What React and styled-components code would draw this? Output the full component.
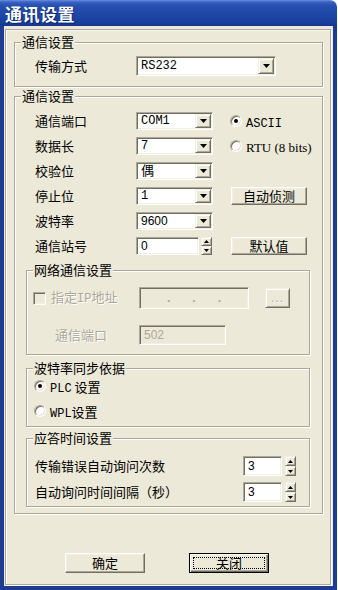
import React from "react";
import styled, { createGlobalStyle, css } from "styled-components";

const CJK = `"Noto Sans CJK SC", "Liberation Sans", sans-serif`;
const MONO = `"Liberation Mono", "Noto Sans CJK SC", monospace`;

const GlobalStyle = createGlobalStyle`
  html, body {
    margin: 0;
    padding: 0;
    background: #fff;
  }
  body {
    font-family: ${CJK};
    font-size: 13px;
    color: #000;
  }
`;

const sunken = css`
  border: 1px solid;
  border-color: #aca899 #fff #fff #aca899;
  box-shadow: inset 1px 1px 0 #716f64, inset -1px -1px 0 #f1efe2;
`;

const raised = css`
  border: 1px solid;
  border-color: #f1efe2 #716f64 #716f64 #f1efe2;
  box-shadow: inset 1px 1px 0 #fff, inset -1px -1px 0 #aca899;
  background: #ece9d8;
`;

const etched = css`
  border: 1px solid #aca899;
  box-shadow: inset 1px 1px 0 #fff, 1px 1px 0 #fff;
`;

const Window = styled.div`
  width: 337px;
  height: 590px;
  display: flex;
  flex-direction: column;
`;

const TitleBar = styled.div`
  height: 26px;
  flex: none;
  display: flex;
  align-items: center;
  padding-left: 5px;
  border-top-right-radius: 7px;
  background: linear-gradient(
    to bottom,
    #6a8ede 0,
    #3b64c4 2px,
    #2751b2 5px,
    #1f48a7 50%,
    #193f9b 85%,
    #13358e 100%
  );
  color: #fff;
  font: bold 17px ${CJK};
  letter-spacing: 0.5px;
  text-shadow: 1px 1px 0 #0c2466;
`;

const Client = styled.div`
  flex: 1;
  display: flex;
  flex-direction: column;
  background: #ece9d8;
  border: 4px solid #1d3d93;
  border-top: 0;
`;

const Frame = styled.div`
  flex: 1;
  display: flex;
  flex-direction: column;
  margin: 3px 2px 1px 1px;
  padding: 5px 7px 11px 8px;
  ${etched};
`;

const Group = styled.div`
  position: relative;
  margin-top: ${(p) => p.$mt || 0}px;
  padding: ${(p) => p.$pad || "0"};
  ${etched};
`;

const Caption = styled.span`
  position: absolute;
  top: -8px;
  left: 6px;
  padding: 0 1px;
  line-height: 14px;
  font-size: 13px;
  background: #ece9d8;
  white-space: nowrap;
`;

const Label = styled.span`
  font-size: 13px;
  line-height: 16px;
  white-space: nowrap;
  padding-left: ${(p) => p.$indent || 0}px;
  color: ${(p) => (p.$disabled ? "#aca899" : "#000")};
  text-shadow: ${(p) => (p.$disabled ? "1px 1px 0 #fff" : "none")};
`;

const Mono = styled.span`
  font-family: ${MONO};
  font-size: 12px;
`;

const TransportRow = styled.div`
  display: grid;
  grid-template-columns: 101px 140px;
  align-items: center;
  padding-left: 20px;
`;

const ComboBox = styled.div`
  box-sizing: border-box;
  width: ${(p) => p.$w}px;
  height: ${(p) => p.$h}px;
  display: flex;
  align-items: center;
  padding: 0 1px 0 4px;
  background: #fff;
  ${sunken};
`;

const ComboText = styled.span`
  flex: 1;
  font-family: ${(p) => (p.$sans ? `"Liberation Sans", sans-serif` : MONO)};
  font-size: 12px;
  line-height: 14px;
  white-space: nowrap;
`;

const DropButton = styled.span`
  box-sizing: border-box;
  width: 16px;
  height: ${(p) => p.$h}px;
  display: flex;
  align-items: center;
  justify-content: center;
  ${raised};
`;

const SettingsGrid = styled.div`
  display: grid;
  grid-template-columns: 101px 94px auto;
  grid-auto-rows: 18px;
  row-gap: 7px;
  align-items: center;
  padding-left: 9px;
`;

const RadioOption = styled.label`
  display: flex;
  align-items: center;
  gap: 4px;
  height: 14px;
  font-size: 13px;
  white-space: nowrap;
`;

const RadioCircle = styled.span`
  box-sizing: border-box;
  width: 12px;
  height: 12px;
  flex: none;
  border-radius: 50%;
  display: flex;
  align-items: center;
  justify-content: center;
  background: #fff;
  border: 1px solid;
  border-color: #aca899 #fff #fff #aca899;
  box-shadow: inset 1px 1px 0 #716f64, inset -1px -1px 0 #e2dfd0;

  &::after {
    content: "";
    width: 4px;
    height: 4px;
    border-radius: 50%;
    background: ${(p) => (p.$on ? "#000" : "transparent")};
  }
`;

const Serif = styled.span`
  font-family: "Liberation Serif", serif;
  font-size: 13px;
`;

const PushButton = styled.button`
  box-sizing: border-box;
  width: ${(p) => p.$w}px;
  height: ${(p) => p.$h}px;
  margin-left: ${(p) => p.$ml || 0}px;
  padding: 0;
  font: 13px ${CJK};
  line-height: 14px;
  color: #000;
  border: 1px solid;
  border-color: #fff #716f64 #716f64 #fff;
  box-shadow: inset -1px -1px 0 #aca899, inset 1px 1px 0 #f1efe2;
  background: #ece9d8;

  ${(p) =>
    p.$default &&
    css`
      border-color: #000;
      box-shadow: inset 1px 1px 0 #fff, inset -1px -1px 0 #716f64,
        inset -2px -2px 0 #aca899;
      outline: 1px dotted #000;
      outline-offset: -5px;
    `}
`;

const Edit = styled.div`
  box-sizing: border-box;
  width: ${(p) => p.$w}px;
  height: ${(p) => p.$h}px;
  display: flex;
  align-items: center;
  padding-left: 4px;
  background: ${(p) => (p.$disabled ? "#ece9d8" : "#fff")};
  color: ${(p) => (p.$disabled ? "#aca899" : "#000")};
  font: 12px "Liberation Sans", sans-serif;
  ${sunken};
`;

const SpinWrap = styled.div`
  display: flex;
  align-items: center;
`;

const SpinButtons = styled.div`
  display: flex;
  flex-direction: column;
  width: 11px;
  height: ${(p) => p.$h}px;
  margin-left: ${(p) => p.$gap}px;
`;

const SpinHalf = styled.span`
  box-sizing: border-box;
  flex: 1;
  display: flex;
  align-items: center;
  justify-content: center;
  ${raised};
`;

const NetGrid = styled.div`
  display: grid;
  grid-template-columns: 106px 110px 25px;
  grid-template-rows: 22px 20px;
  row-gap: 16px;
  align-items: center;
  padding-left: 6px;
`;

const CheckRow = styled.div`
  display: flex;
  align-items: center;
  gap: 5px;
`;

const CheckBox = styled.span`
  box-sizing: border-box;
  width: 13px;
  height: 13px;
  background: #ece9d8;
  ${sunken};
`;

const IpDots = styled.div`
  display: flex;
  justify-content: space-around;
  width: 100%;
  padding: 0 16px 0 12px;
  color: #aca899;
  font: bold 12px "Liberation Sans", sans-serif;
`;

const EllipsisButton = styled.span`
  box-sizing: border-box;
  width: 25px;
  height: 20px;
  margin-left: 16px;
  display: flex;
  align-items: center;
  justify-content: center;
  color: #aca899;
  text-shadow: 1px 1px 0 #fff;
  font: 12px "Liberation Sans", sans-serif;
  letter-spacing: 1px;
  ${raised};
`;

const RadioStack = styled.div`
  display: flex;
  flex-direction: column;
  gap: 11px;
  padding-left: 7px;
`;

const ResponseGrid = styled.div`
  display: grid;
  grid-template-columns: 208px auto;
  grid-auto-rows: 20px;
  row-gap: 6px;
  align-items: center;
  padding-left: 8px;
`;

const ButtonBar = styled.div`
  margin-top: auto;
  display: flex;
  gap: 44px;
  padding-left: 51px;
`;

const Arrow = ({ dir = "down", w = 7, h = 4 }) => (
  <svg width={w} height={h} viewBox={`0 0 ${w} ${h}`}>
    {dir === "down" ? (
      <polygon points={`0,0 ${w},0 ${w / 2},${h}`} fill="#000" />
    ) : (
      <polygon points={`0,${h} ${w},${h} ${w / 2},0`} fill="#000" />
    )}
  </svg>
);

const Combo = ({ w, h = 18, sans, children }) => (
  <ComboBox $w={w} $h={h}>
    <ComboText $sans={sans}>{children}</ComboText>
    <DropButton $h={h - 4}>
      <Arrow />
    </DropButton>
  </ComboBox>
);

const Spin = ({ w, h, gap, children }) => (
  <SpinWrap>
    <Edit $w={w} $h={h}>
      {children}
    </Edit>
    <SpinButtons $h={h} $gap={gap}>
      <SpinHalf>
        <Arrow dir="up" w={5} h={3} />
      </SpinHalf>
      <SpinHalf>
        <Arrow w={5} h={3} />
      </SpinHalf>
    </SpinButtons>
  </SpinWrap>
);

const Radio = ({ on, children }) => (
  <RadioOption>
    <RadioCircle $on={on} />
    <span>{children}</span>
  </RadioOption>
);

export default function App() {
  return (
    <>
      <GlobalStyle />
      <Window>
        <TitleBar>通讯设置</TitleBar>
        <Client>
          <Frame>
            <Group $mt={7} $pad="13px 0 10px 0">
              <Caption>通信设置</Caption>
              <TransportRow>
                <Label>传输方式</Label>
                <Combo w={140} h={20}>
                  RS232
                </Combo>
              </TransportRow>
            </Group>

            <Group $mt={9} $pad="15px 12px 6px 11px">
              <Caption>通信设置</Caption>
              <SettingsGrid>
                <Label>通信端口</Label>
                <Combo w={77}>COM1</Combo>
                <Radio on>
                  <Mono>ASCII</Mono>
                </Radio>

                <Label>数据长</Label>
                <Combo w={77}>7</Combo>
                <Radio>
                  <Serif>RTU (8 bits)</Serif>
                </Radio>

                <Label>校验位</Label>
                <Combo w={77}>
                  <span style={{ fontFamily: CJK, fontSize: 13 }}>偶</span>
                </Combo>
                <span />

                <Label>停止位</Label>
                <Combo w={77}>1</Combo>
                <PushButton $w={76} $h={18} $ml={1}>
                  自动侦测
                </PushButton>

                <Label>波特率</Label>
                <Combo w={77} sans>
                  9600
                </Combo>
                <span />

                <Label>通信站号</Label>
                <Spin w={63} h={18} gap={2}>
                  0
                </Spin>
                <PushButton $w={76} $h={18} $ml={1}>
                  默认值
                </PushButton>
              </SettingsGrid>

              <Group $mt={15} $pad="16px 0 9px 0">
                <Caption>网络通信设置</Caption>
                <NetGrid>
                  <CheckRow>
                    <CheckBox />
                    <Label $disabled>
                      指定<span style={{ fontFamily: MONO, fontSize: 12 }}>IP</span>地址
                    </Label>
                  </CheckRow>
                  <Edit $w={110} $h={22} $disabled>
                    <IpDots>
                      <span>.</span>
                      <span>.</span>
                      <span>.</span>
                    </IpDots>
                  </Edit>
                  <EllipsisButton>...</EllipsisButton>

                  <Label $disabled $indent={22}>
                    通信端口
                  </Label>
                  <Edit $w={87} $h={20} $disabled>
                    502
                  </Edit>
                  <span />
                </NetGrid>
              </Group>

              <Group $mt={13} $pad="10px 0 8px 0">
                <Caption>波特率同步依据</Caption>
                <RadioStack>
                  <Radio on>
                    <Mono>PLC</Mono>&nbsp;设置
                  </Radio>
                  <Radio>
                    <Mono>WPL</Mono>设置
                  </Radio>
                </RadioStack>
              </Group>

              <Group $mt={11} $pad="17px 0 4px 0">
                <Caption>应答时间设置</Caption>
                <ResponseGrid>
                  <Label>传输错误自动询问次数</Label>
                  <Spin w={39} h={20} gap={3}>
                    3
                  </Spin>
                  <Label>自动询问时间间隔（秒）</Label>
                  <Spin w={39} h={20} gap={3}>
                    3
                  </Spin>
                </ResponseGrid>
              </Group>
            </Group>

            <ButtonBar>
              <PushButton $w={80} $h={20}>
                确定
              </PushButton>
              <PushButton $w={80} $h={20} $default>
                关闭
              </PushButton>
            </ButtonBar>
          </Frame>
        </Client>
      </Window>
    </>
  );
}
